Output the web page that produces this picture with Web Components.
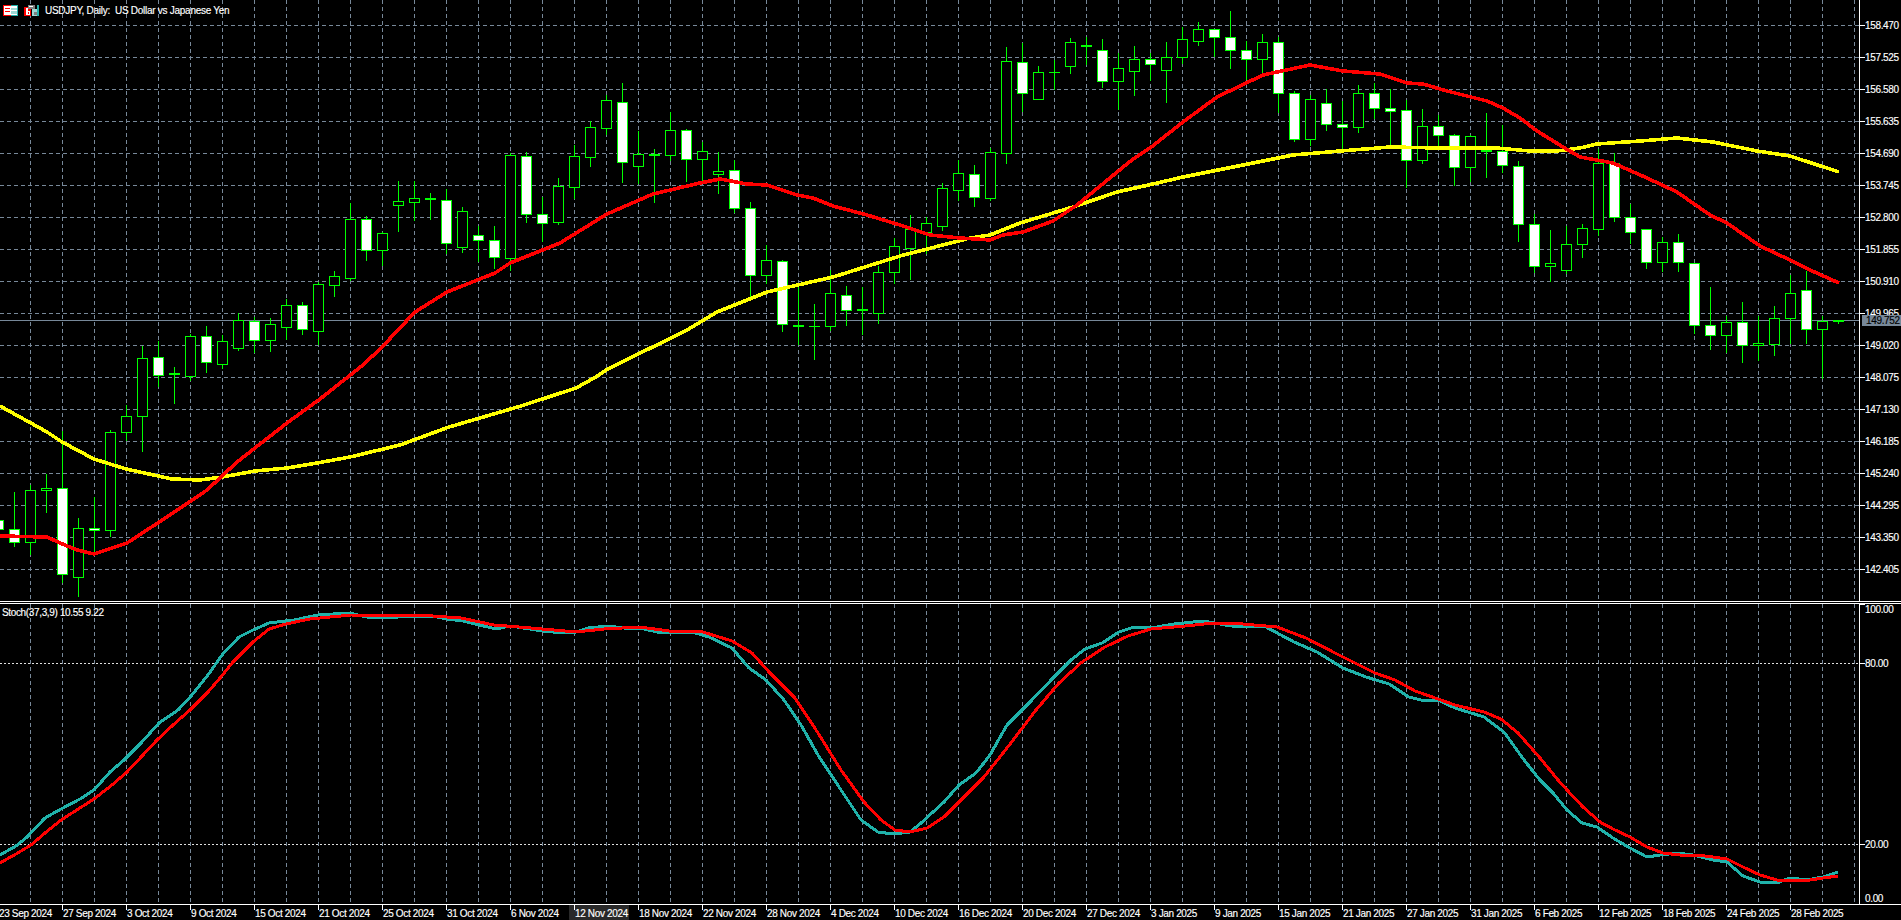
<!DOCTYPE html>
<html>
<head>
<meta charset="utf-8">
<title>USDJPY, Daily</title>
<style>
  html, body { margin: 0; height: 100%; background: #000; overflow: hidden; }
</style>
</head>
<body>
<mt-chart>
  <price-pane slot="main">
    <chart-legend>USDJPY, Daily:  US Dollar vs Japanese Yen</chart-legend>
  </price-pane>
  <price-scale slot="main-scale" values="158.470,157.525,156.580,155.635,154.690,153.745,152.800,151.855,150.910,149.965,149.020,148.075,147.130,146.185,145.240,144.295,143.350,142.405">
    <price-tag>149.752</price-tag>
  </price-scale>
  <stoch-pane slot="sub">
    <stoch-legend>Stoch(37,3,9) 10.55 9.22</stoch-legend>
  </stoch-pane>
  <stoch-scale slot="sub-scale"></stoch-scale>
  <time-scale slot="time" labels="23 Sep 2024,27 Sep 2024,3 Oct 2024,9 Oct 2024,15 Oct 2024,21 Oct 2024,25 Oct 2024,31 Oct 2024,6 Nov 2024,12 Nov 2024,18 Nov 2024,22 Nov 2024,28 Nov 2024,4 Dec 2024,10 Dec 2024,16 Dec 2024,20 Dec 2024,27 Dec 2024,3 Jan 2025,9 Jan 2025,15 Jan 2025,21 Jan 2025,27 Jan 2025,31 Jan 2025,6 Feb 2025,12 Feb 2025,18 Feb 2025,24 Feb 2025,28 Feb 2025"></time-scale>
</mt-chart>

<script>
const GRID = '#778899';
const LIME = '#00ff00';
const AXIS_FONT = `font: 10px "Liberation Sans", Arial, sans-serif; letter-spacing: -.35px; -webkit-text-stroke: .15px;`;

// [x, high, body top, body bottom, low, fill]  fill: 0 black, 1 white, 2 lime
const CANDLES = [
  [-2,516,520,529,533,1],[14,492,529,542,546,1],[30,485,490,542,554,0],[46,474,488,490,512,0],
  [62,431,488,574,582,1],[78,518,528,577,596,0],[94,497,528,530,552,1],[110,430,432,530,536,0],
  [126,405,416,432,440,0],[142,346,358,416,451,0],[158,341,357,375,386,1],[174,367,373,374,403,2],
  [190,334,336,376,380,0],[206,326,336,362,372,1],[222,335,341,364,368,0],[238,313,320,348,350,0],
  [254,317,321,340,352,1],[270,318,324,340,351,0],[286,299,305,327,339,0],[302,302,305,329,334,1],
  [318,282,284,331,344,0],[334,271,276,285,296,0],[350,203,219,278,280,0],[366,216,219,250,260,1],
  [382,232,233,250,265,0],[398,181,201,205,231,0],[414,181,198,202,220,0],[430,193,198,199,219,2],
  [446,189,200,243,253,1],[462,207,211,247,252,0],[478,226,235,240,261,1],[494,226,240,257,268,1],
  [510,153,155,258,270,0],[526,152,156,214,222,1],[542,197,214,223,241,1],[558,178,186,222,224,0],
  [574,145,156,187,198,0],[590,121,127,157,166,0],[606,95,100,128,134,0],[622,83,102,162,182,1],
  [638,131,154,166,183,0],[654,149,154,155,202,2],[670,112,130,155,160,0],[686,129,130,159,181,1],
  [702,142,151,159,180,0],[718,152,171,174,193,0],[734,160,170,208,212,1],[750,202,208,275,297,1],
  [766,245,260,275,283,0],[782,260,261,324,331,1],[798,287,325,326,344,2],[814,304,326,326,359,2],
  [830,270,293,326,330,0],[846,286,295,310,325,1],[862,287,309,310,334,2],[878,266,272,313,323,0],
  [894,238,246,272,283,0],[910,215,229,248,279,0],[926,217,223,232,253,0],[942,183,188,226,230,0],
  [958,160,173,190,200,0],[974,165,174,197,206,1],[990,148,152,198,200,0],[1006,47,61,153,163,0],
  [1022,43,62,93,111,1],[1038,66,72,99,99,0],[1054,60,72,72,89,2],[1070,38,42,66,73,0],
  [1086,37,45,46,64,2],[1102,39,50,81,87,1],[1118,53,68,81,109,0],[1134,46,59,71,95,0],
  [1150,53,59,64,80,1],[1166,42,57,70,102,0],[1182,27,39,57,63,0],[1198,22,29,41,45,0],
  [1214,29,29,37,56,1],[1230,11,37,50,68,1],[1246,41,50,59,79,1],[1262,34,42,59,74,0],
  [1278,37,42,93,112,1],[1294,91,93,139,141,1],[1310,95,99,139,145,0],[1326,89,103,124,130,1],
  [1342,101,124,127,149,1],[1358,85,93,127,132,0],[1374,83,93,108,118,1],[1390,89,108,111,147,1],
  [1406,100,110,160,187,1],[1422,109,126,160,163,0],[1438,115,126,135,147,1],[1454,134,135,167,185,1],
  [1470,135,136,167,181,0],[1486,113,150,151,177,2],[1502,125,151,165,172,1],[1518,161,166,224,241,1],
  [1534,214,224,266,272,1],[1550,230,263,266,281,0],[1566,226,244,270,273,0],[1582,224,228,244,257,0],
  [1598,149,163,229,235,0],[1614,153,163,217,221,1],[1630,204,217,232,243,1],[1646,229,229,262,268,1],
  [1662,237,242,262,271,0],[1678,234,242,262,271,1],[1694,263,263,325,333,1],[1710,287,325,335,349,1],
  [1726,316,322,335,352,0],[1742,302,322,345,362,1],[1758,316,343,345,360,0],[1774,306,318,344,355,0],
  [1790,275,293,318,343,0],[1806,271,290,329,343,1],[1822,316,321,329,378,0],[1838,320,320,321,323,2]
];

const MA_SLOW = [[0,406],[47,432],[62,442],[94,459],[126,469],[172,479],[200,480],[222,477],[255,471],[287,468],[317,463],[350,457],[400,445],[449,427],[521,406],[576,388],[594,378],[608,369],[687,330],[717,312],[767,292],[833,277],[900,256],[970,238],[990,235],[1020,223],[1073,207],[1117,192],[1153,184],[1183,177],[1243,165],[1293,155],[1340,151],[1390,147],[1440,148],[1497,148],[1530,151],[1557,151],[1580,148],[1597,144],[1640,141],[1677,138],[1713,142],[1757,151],[1790,156],[1839,172]];

const MA_FAST = [[0,536],[47,537],[60,543],[77,550],[94,554],[127,543],[173,513],[207,490],[237,462],[287,423],[320,399],[363,365],[382,347],[415,312],[447,292],[495,273],[510,263],[560,243],[607,214],[653,194],[700,183],[720,179],[747,184],[767,185],[797,195],[813,198],[833,206],[867,215],[900,225],[930,235],[960,238],[990,240],[1003,235],[1023,232],[1053,221],[1077,205],[1133,159],[1150,148],[1183,122],[1217,97],[1263,75],[1310,65],[1343,71],[1380,74],[1407,83],[1423,84],[1447,91],[1487,101],[1503,108],[1520,118],[1537,131],[1563,147],[1580,157],[1613,163],[1647,178],[1677,192],[1710,215],[1727,223],[1760,246],[1790,260],[1810,270],[1839,283]];

const STOCH_MAIN = [[0,855],[16,846],[27,837],[45,818],[61,809],[80,799],[94,790],[110,772],[124,760],[141,743],[159,723],[178,710],[192,695],[208,675],[222,655],[239,637],[253,630],[269,623],[294,620],[318,615],[349,613],[367,617],[388,618],[408,616],[437,617],[447,619],[463,621],[496,629],[510,626],[543,631],[563,633],[576,632],[588,628],[608,626],[624,628],[640,628],[657,632],[692,632],[709,637],[732,648],[749,668],[766,680],[784,700],[801,725],[818,755],[841,790],[861,820],[878,832],[893,834],[910,832],[921,823],[944,802],[959,785],[976,773],[990,755],[1007,725],[1030,702],[1053,678],[1071,660],[1085,649],[1102,643],[1119,632],[1134,627],[1151,628],[1174,624],[1203,621],[1231,626],[1266,627],[1294,642],[1317,652],[1343,668],[1366,677],[1389,684],[1409,697],[1421,700],[1438,700],[1455,708],[1484,717],[1504,732],[1524,760],[1540,780],[1553,793],[1567,810],[1582,823],[1597,827],[1613,838],[1630,848],[1647,857],[1660,855],[1677,853],[1693,855],[1713,860],[1727,862],[1743,876],[1760,882],[1777,883],[1790,878],[1807,880],[1823,877],[1838,872]];

const STOCH_SIGNAL = [[0,863],[16,854],[31,845],[45,833],[61,820],[94,799],[112,785],[127,772],[157,740],[173,725],[190,710],[208,692],[220,678],[233,662],[253,642],[269,629],[286,624],[310,619],[351,615],[433,616],[461,618],[494,625],[531,628],[576,632],[604,629],[640,627],[669,631],[703,632],[732,641],[752,653],[769,672],[795,698],[818,733],[841,770],[864,802],[881,820],[895,830],[910,832],[927,828],[944,817],[961,800],[984,777],[1007,748],[1036,710],[1059,683],[1082,662],[1105,647],[1128,636],[1151,629],[1185,626],[1214,623],[1231,623],[1277,627],[1306,638],[1335,653],[1375,673],[1395,680],[1415,691],[1438,699],[1455,705],[1484,712],[1501,719],[1518,733],[1540,758],[1558,780],[1567,790],[1583,807],[1600,822],[1613,829],[1630,837],[1647,847],[1663,853],[1680,855],[1697,855],[1713,857],[1727,859],[1743,867],[1760,875],[1777,880],[1793,881],[1810,880],[1823,878],[1838,876]];

const polyline = (pts, color, width) =>
  `<polyline points="${pts.map(p => p.join(',')).join(' ')}" fill="none" stroke="${color}" stroke-width="${width}" stroke-linejoin="round"/>`;

const verticalGrid = (y1, y2) => {
  let out = '';
  for (let x = 30; x < 1859; x += 32) {
    out += `<line x1="${x + .5}" y1="${y1}" x2="${x + .5}" y2="${y2}" stroke="${GRID}" stroke-dasharray="4 3"/>`;
  }
  return out;
};

const hline = (y, color, dash) =>
  `<line x1="0" y1="${y + .5}" x2="1859" y2="${y + .5}" stroke="${color}"${dash ? ` stroke-dasharray="${dash}"` : ''}/>`;

class ChartPane extends HTMLElement {
  constructor() {
    super();
    this.attachShadow({ mode: 'open' });
    this.shadowRoot.innerHTML = `
      <style>
        :host { display: block; position: relative; background: #000; overflow: hidden; height: 100%; }
        svg { display: block; }
      </style>
      <svg width="1859" height="${this.paneHeight}" viewBox="0 ${this.paneTop} 1859 ${this.paneHeight}" shape-rendering="crispEdges">${this.drawing()}</svg>
      <slot></slot>
    `;
  }
}

class PricePane extends ChartPane {
  get paneTop() { return 0; }
  get paneHeight() { return 601; }
  drawing() {
    let out = verticalGrid(0, 601);
    for (let y = 25; y <= 569; y += 32) out += hline(y, GRID, '4 3');
    out += hline(320, GRID);
    for (const [x, high, top, bot, low, fill] of CANDLES) {
      out += `<rect x="${x}" y="${high}" width="1" height="${low - high + 1}" fill="${LIME}"/>`;
      out += `<rect x="${x - 5}" y="${top}" width="11" height="${bot - top + 1}" fill="${LIME}"/>`;
      if (fill < 2 && bot - top > 1) {
        out += `<rect x="${x - 4}" y="${top + 1}" width="9" height="${bot - top - 1}" fill="${fill ? '#fff' : '#000'}"/>`;
      }
    }
    return out + polyline(MA_SLOW, '#ffff00', 3.6) + polyline(MA_FAST, '#ff0000', 3.6);
  }
}

class StochPane extends ChartPane {
  get paneTop() { return 604; }
  get paneHeight() { return 300; }
  drawing() {
    return verticalGrid(604, 904) + hline(663, '#e0e0e0', '2 2') + hline(844, '#e0e0e0', '2 2') +
      polyline(STOCH_MAIN, '#20b2aa', 3) + polyline(STOCH_SIGNAL, '#ff0000', 3);
  }
}

class ChartLegend extends HTMLElement {
  constructor() {
    super();
    this.attachShadow({ mode: 'open' });
    this.shadowRoot.innerHTML = `
      <style>
        :host { position: absolute; left: 3px; top: 5px; display: flex; align-items: center; gap: 6px; height: 11px; color: #fff; ${AXIS_FONT} letter-spacing: -.27px; }
        span { white-space: pre; }
        svg { display: block; }
      </style>
      <svg width="15" height="11" viewBox="0 0 15 11" shape-rendering="crispEdges">
        <rect width="15" height="11" fill="#fff"/>
        <rect x="0" y="0" width="8" height="1" fill="#f00"/><rect x="0" y="10" width="8" height="1" fill="#f00"/>
        <rect x="0" y="0" width="1" height="11" fill="#f00"/><rect x="2" y="3" width="5" height="1" fill="#f00"/>
        <rect x="2" y="6" width="5" height="1" fill="#f00"/><rect x="8" y="0" width="7" height="1" fill="#20b2aa"/>
        <rect x="8" y="10" width="7" height="1" fill="#20b2aa"/><rect x="14" y="0" width="1" height="11" fill="#20b2aa"/>
        <rect x="8" y="3" width="6" height="2" fill="#9fd8d4"/><rect x="8" y="6" width="6" height="3" fill="#9fd8d4"/>
      </svg>
      <svg width="15" height="11" viewBox="0 0 15 11" shape-rendering="crispEdges">
        <rect x="0" y="2" width="7" height="9" fill="#f00"/><rect x="2" y="3" width="2" height="7" fill="#fff"/>
        <rect x="2" y="6" width="4" height="4" fill="#fff"/><rect x="4" y="7" width="1" height="2" fill="#f00"/>
        <rect x="4" y="0" width="7" height="4" fill="#808080"/><rect x="5" y="1" width="4" height="1" fill="#fff"/>
        <rect x="8" y="4" width="7" height="7" fill="#9fd8d4"/><rect x="13" y="0" width="2" height="11" fill="#20b2aa"/>
        <rect x="10" y="7" width="3" height="3" fill="#808080"/>
      </svg>
      <span><slot></slot></span>
    `;
  }
}

class StochLegend extends HTMLElement {
  constructor() {
    super();
    this.attachShadow({ mode: 'open' });
    this.shadowRoot.innerHTML = `
      <style>
        :host { position: absolute; left: 2px; top: 3px; color: #fff; white-space: nowrap; ${AXIS_FONT} line-height: 12px; }
      </style>
      <slot></slot>
    `;
  }
}

class PriceScale extends HTMLElement {
  constructor() {
    super();
    this.attachShadow({ mode: 'open' });
    const rows = this.getAttribute('values').split(',').map(v => `<div>${v}</div>`).join('');
    this.shadowRoot.innerHTML = `
      <style>
        :host {
          display: block; position: relative; height: 100%; box-sizing: border-box; overflow: hidden;
          border-left: 1px solid #fff; padding: 9px 0 0 5px; color: #fff; ${AXIS_FONT}
          background: linear-gradient(#fff 1px, transparent 1px) 0 25px / 5px 32px repeat-y;
        }
        div { height: 32px; line-height: 33px; }
      </style>
      ${rows}
      <slot></slot>
    `;
  }
}

class PriceTag extends HTMLElement {
  constructor() {
    super();
    this.attachShadow({ mode: 'open' });
    this.shadowRoot.innerHTML = `
      <style>
        :host {
          position: absolute; left: 2px; right: 0; top: 315px; height: 11px; padding-left: 4px;
          background: ${GRID}; color: #000; ${AXIS_FONT} line-height: 12px;
        }
      </style>
      <slot></slot>
    `;
  }
}

class StochScale extends HTMLElement {
  constructor() {
    super();
    this.attachShadow({ mode: 'open' });
    this.shadowRoot.innerHTML = `
      <style>
        :host {
          display: flex; flex-direction: column; height: 100%; box-sizing: border-box; overflow: hidden;
          border-left: 1px solid #fff; padding-left: 5px; color: #fff; ${AXIS_FONT}
          background:
            linear-gradient(#fff, #fff) 0 59px / 5px 1px no-repeat,
            linear-gradient(#fff, #fff) 0 240px / 5px 1px no-repeat,
            linear-gradient(#fff, #fff) 0 0 / 5px 1px no-repeat;
        }
        div { height: 14px; line-height: 14px; flex: none; }
      </style>
      <div style="margin-top: -1px">100.00</div>
      <div style="margin-top: 40px">80.00</div>
      <div style="margin-top: 167px">20.00</div>
      <div style="margin-top: 40px">0.00</div>
    `;
  }
}

class TimeScale extends HTMLElement {
  constructor() {
    super();
    this.attachShadow({ mode: 'open' });
    const cells = this.getAttribute('labels').split(',').map(t => `<div class="${t === '12 Nov 2024' ? 'hl' : ''}">${t}</div>`).join('');
    this.shadowRoot.innerHTML = `
      <style>
        :host {
          display: grid; grid-auto-flow: column; grid-auto-columns: 64px; height: 100%; box-sizing: border-box;
          border-top: 1px solid #fff; margin-left: -2px; color: #fff; ${AXIS_FONT}
        }
        div {
          white-space: nowrap; padding: 2px 0 0 1px; line-height: 14px;
          background: linear-gradient(#fff, #fff) 0 0 / 1px 5px no-repeat;
        }
        .hl { position: relative; }
        .hl::after {
          content: ""; position: absolute; left: -5px; top: -4px; width: 60px; height: 20px;
          border-radius: 2px; background: rgba(255,255,255,.16);
        }
      </style>
      ${cells}
    `;
  }
}

class MtChart extends HTMLElement {
  constructor() {
    super();
    this.attachShadow({ mode: 'open' });
    this.shadowRoot.innerHTML = `
      <style>
        :host {
          display: grid; width: 1901px; height: 920px; overflow: hidden; background: #000;
          grid-template-columns: 1859px 42px;
          grid-template-rows: 601px 3px 300px 16px;
        }
        .sep { grid-column: 1 / -1; box-sizing: border-box; border-top: 1px solid #fff; border-bottom: 1px solid #fff; }
        .time { grid-column: 1 / -1; overflow: hidden; }
      </style>
      <slot name="main"></slot>
      <slot name="main-scale"></slot>
      <div class="sep"></div>
      <slot name="sub"></slot>
      <slot name="sub-scale"></slot>
      <div class="time"><slot name="time"></slot></div>
    `;
  }
}

customElements.define('price-pane', PricePane);
customElements.define('stoch-pane', StochPane);
customElements.define('chart-legend', ChartLegend);
customElements.define('stoch-legend', StochLegend);
customElements.define('price-scale', PriceScale);
customElements.define('price-tag', PriceTag);
customElements.define('stoch-scale', StochScale);
customElements.define('time-scale', TimeScale);
customElements.define('mt-chart', MtChart);
</script>
</body>
</html>
